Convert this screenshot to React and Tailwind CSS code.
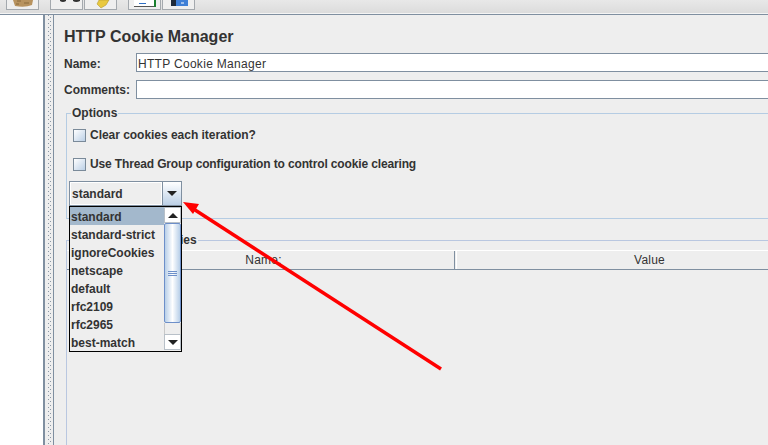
const font = { fontFamily: '"Liberation Sans", Arial, sans-serif' }

const items = ['standard', 'standard-strict', 'ignoreCookies', 'netscape', 'default', 'rfc2109', 'rfc2965', 'best-match']

function ToolButton({ className, children }) {
  return (
    <div className={`w-[33px] h-[10px] box-border border-x border-b border-[#a4a9ae] bg-[#efefef] overflow-hidden ${className}`}>
      {children}
    </div>
  )
}

function Toolbar() {
  return (
    <div className="h-[13px] shrink-0 flex items-start bg-gradient-to-b from-[#e8e8e8] to-[#dcdcdc]">
      <ToolButton className="ml-[6px]">
        <svg width="31" height="9">
          <path d="M6 0H26L25 5Q18 8 8 6Z" fill="#b8935f" />
          <path d="M10 1h4M17 3h5M9 4h3" stroke="#8a6a3c" />
        </svg>
      </ToolButton>
      <ToolButton className="ml-[11px]">
        <svg width="31" height="9">
          <path d="M9 0H15V1Q12 3 9 1ZM22 0H29V1Q25 3 22 1Z" fill="#333333" />
        </svg>
      </ToolButton>
      <ToolButton className="ml-[1px]">
        <svg width="31" height="9">
          <path d="M14 0H24L21 5L16 8L12 4Z" fill="#e9c93f" stroke="#a98f2a" strokeWidth="0.5" />
        </svg>
      </ToolButton>
      <ToolButton className="ml-[11px]">
        <svg width="31" height="9">
          <rect x="5" y="0" width="20" height="6" fill="#ffffff" />
          <path d="M5 6.5H25" stroke="#555555" />
          <path d="M10 3.5H17" stroke="#2f6fc4" />
          <rect x="25" y="0" width="2" height="7" fill="#1a7f2e" />
        </svg>
      </ToolButton>
      <ToolButton className="ml-[1px]">
        <svg width="31" height="9">
          <rect x="8" y="0" width="5" height="6" fill="#1f2a3a" />
          <rect x="13" y="0" width="12" height="6" fill="#3f7fd6" />
          <path d="M18 3H21" stroke="#ffffff" />
        </svg>
      </ToolButton>
    </div>
  )
}

function Check({ label, className }) {
  return (
    <div className="flex items-center gap-[4px] pl-[6px]">
      <div className="w-[13px] h-[13px] box-border border border-[#7a8a99] bg-gradient-to-br from-white to-[#bcd0e6]" />
      <span className={className}>{label}</span>
    </div>
  )
}

function ScrollBar() {
  return (
    <div className="w-[17px] shrink-0 flex flex-col bg-[#eeeeee] pb-[1px]">
      <div className="h-[16px] box-border border border-[#b8c0c8] bg-white flex items-center justify-center">
        <div className="w-0 h-0 border-x-[5px] border-x-transparent border-b-[5px] border-b-[#222222]" />
      </div>
      <div className="h-[100px] box-border border border-[#6d8fc9] rounded-[2px] bg-gradient-to-r from-[#b8cfe8] via-white to-[#b8cfe8] flex flex-col items-center justify-center gap-[1px]">
        <div className="w-[9px] h-px bg-[#6d8fc9]" />
        <div className="w-[9px] h-px bg-[#6d8fc9]" />
        <div className="w-[9px] h-px bg-[#6d8fc9]" />
      </div>
      <div className="flex-1 border-x border-[#c8c8c8]" />
      <div className="h-[16px] box-border border border-[#b8c0c8] bg-white flex items-center justify-center">
        <div className="w-0 h-0 border-x-[5px] border-x-transparent border-t-[5px] border-t-[#222222]" />
      </div>
    </div>
  )
}

function Popup() {
  return (
    <div className="absolute left-[69px] top-[206px] w-[113px] h-[146px] box-border border border-black bg-[#eeeeee] flex text-[12px] font-bold text-[#333333] z-10">
      <div className="flex-1 flex flex-col">
        {items.map((item, i) => (
          <div key={item} className={`h-[18px] leading-[20px] pl-[1px] ${i === 0 ? 'bg-[#a3b8cc]' : ''}`}>{item}</div>
        ))}
      </div>
      <ScrollBar />
    </div>
  )
}

function Arrow() {
  return (
    <svg className="absolute left-0 top-0 z-20 pointer-events-none" width="768" height="445">
      <line x1="441" y1="369" x2="192" y2="208" stroke="#ff0000" strokeWidth="3.5" />
      <polygon points="183,202 199,204 193,214" fill="#ff0000" />
    </svg>
  )
}

export default function App() {
  return (
    <div className="relative w-[768px] h-[445px] overflow-hidden flex flex-col bg-[#eeeeee] text-[#333333]" style={font}>
      <Toolbar />
      <div className="h-px shrink-0 bg-[#f4f4f4]" />
      <div className="flex-1 min-h-0 flex border-t border-[#7f8fa0]">
        <div className="w-[43px] shrink-0 bg-white border-r-2 border-[#7f8fa0] box-content" />
        <div className="w-[8px] shrink-0 flex justify-center gap-px pl-[1px]">
          <div className="w-px bg-[linear-gradient(#8a97a5_1px,transparent_1px)] bg-[length:1px_4px]" />
          <div className="w-px bg-[linear-gradient(#8a97a5_1px,transparent_1px)] bg-[length:1px_4px] bg-[position:0_2px]" />
        </div>
        <div className="flex-1 min-w-0 border-l border-[#7f8fa0] pt-[12px] overflow-hidden">
          <div className="pl-[10px] text-[16px] leading-[20px] font-bold">HTTP Cookie Manager</div>

          <div className="mt-[6px] flex items-center h-[19px] pl-[10px] text-[12px] font-bold">
            <span className="w-[72px] shrink-0 pt-[2px]">Name:</span>
            <div className="flex-1 h-[19px] box-border border-y border-l border-[#7f8fa0] bg-white pl-[1px] pt-[1px] font-normal leading-[18px] tracking-[0.3px]">HTTP Cookie Manager</div>
          </div>
          <div className="mt-[8px] flex items-center h-[19px] pl-[10px] text-[12px] font-bold">
            <span className="w-[72px] shrink-0 pt-[1px]">Comments:</span>
            <div className="flex-1 h-[19px] box-border border-y border-l border-[#7f8fa0] bg-white" />
          </div>

          <fieldset className="mt-[7px] ml-[12px] h-[113px] box-border border border-r-0 border-[#b5cce3] text-[12px] font-bold">
            <legend className="ml-[4px] px-[1px] leading-[14px]">Options</legend>
            <div className="mt-[7px] h-[16px] flex items-center"><Check label="Clear cookies each iteration?" className="tracking-[-0.03px]" /></div>
            <div className="mt-[13px] h-[16px] flex items-center"><Check label="Use Thread Group configuration to control cookie clearing" className="tracking-[-0.14px]" /></div>
            <div className="mt-[9px] ml-[2px] w-[113px] h-[25px] box-border border border-[#7f8fa0] flex">
              <div className="flex-1 border border-white bg-[#eeeeee] pl-[1px] leading-[22px]">standard</div>
              <div className="w-[19px] border-l border-[#7f8fa0] bg-gradient-to-b from-white to-[#bcd0e6] flex items-center justify-center">
                <div className="w-0 h-0 border-x-[5px] border-x-transparent border-t-[5px] border-t-[#222222]" />
              </div>
            </div>
          </fieldset>

          <fieldset className="mt-[14px] ml-[12px] w-[800px] h-[220px] box-border border border-r-0 border-[#b9c7e0] text-[12px] font-bold">
            <legend className="ml-[4px] px-[1px] leading-[14px]">User-Defined Cookies</legend>
            <div className="mt-[3px] flex h-[20px] box-border border-t border-white border-b border-b-[#7f8fa0] font-normal leading-[19px] tracking-[0.2px]">
              <div className="w-[388px] shrink-0 border-r border-[#7f8fa0] text-center pl-[6px]">Name:</div>
              <div className="w-[386px] shrink-0 ml-px border-l border-white text-center">Value</div>
            </div>
          </fieldset>
        </div>
      </div>
      <Popup />
      <Arrow />
    </div>
  )
}
